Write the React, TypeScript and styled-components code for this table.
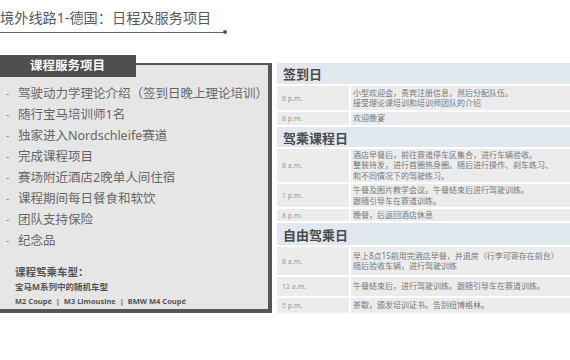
import React from 'react';
import styled, { createGlobalStyle } from 'styled-components';

const GlobalStyle = createGlobalStyle`
  html, body {
    margin: 0;
    padding: 0;
    background: #ffffff;
    overflow: hidden;
  }
  body {
    font-family: "Noto Sans", "Noto Sans CJK SC", sans-serif;
  }
`;

const CJK = `"Noto Sans", "Noto Sans CJK SC", sans-serif`;

const Page = styled.div`
  width: 570px;
  height: 360px;
  overflow: hidden;
  position: relative;
`;

const TitleBlock = styled.div`
  padding-top: 8px;
  width: 228px;
`;

const Title = styled.h1`
  margin: 0;
  font-family: ${CJK};
  font-size: 14.2px;
  font-weight: 400;
  line-height: 20px;
  color: #5a5a5a;
  white-space: nowrap;
`;

const TitleRule = styled.div`
  display: flex;
  align-items: center;
  margin-top: 2px;
  width: 227px;

  &::before {
    content: '';
    flex: 1;
    height: 1px;
    background: #666;
  }
  &::after {
    content: '';
    width: 4px;
    height: 4px;
    border-radius: 50%;
    background: #555;
  }
`;

const Body = styled.div`
  display: flex;
  align-items: flex-start;
  margin-top: 21px;
  gap: 5px;
`;

const LeftColumn = styled.div`
  width: 272px;
  flex: none;
  display: flex;
  flex-direction: column;
`;

const Tab = styled.div`
  width: 136px;
  height: 22px;
  background: #4f4f4f;
  color: #ffffff;
  font-family: ${CJK};
  font-size: 12.5px;
  font-weight: 700;
  line-height: 22px;
  padding-left: 30px;
  box-sizing: border-box;
  margin-bottom: -14px;
  position: relative;
  z-index: 1;
`;

const Panel = styled.div`
  height: 250px;
  box-sizing: border-box;
  background: #e6e6e6;
  border-top: 2px solid #555;
  border-right: 4px solid #555;
  border-bottom: 4px solid #555;
  padding: 17px 0 0 6px;
`;

const ServiceList = styled.ul`
  list-style: none;
  margin: 0;
  padding: 0;
`;

const ServiceItem = styled.li`
  display: flex;
  align-items: center;
  height: 21px;
  font-family: ${CJK};
  font-size: 12.5px;
  color: #666;
  white-space: nowrap;

  &::before {
    content: '-';
    flex: none;
    width: 12px;
    font-size: 10px;
    color: #888;
  }
`;

const CarInfo = styled.div`
  margin: 15px 0 0 9px;
  font-family: ${CJK};
  font-weight: 700;
  color: #555;
  white-space: nowrap;
`;

const CarLine = styled.div<{ $size: number; $height: number }>`
  font-size: ${(p) => p.$size}px;
  line-height: ${(p) => p.$height}px;
`;

const Schedule = styled.div`
  width: 300px;
  flex: none;
  display: grid;
  grid-template-columns: 72px 1fr;
  column-gap: 2px;
  row-gap: 2px;
  margin-top: 8px;
`;

const DayHeader = styled.div<{ $h: number }>`
  grid-column: 1 / -1;
  height: ${(p) => p.$h}px;
  background: #e2e8f0;
  font-family: ${CJK};
  font-size: 13px;
  font-weight: 700;
  color: #4a4a4a;
  display: flex;
  align-items: center;
  padding-left: 6px;
`;

const TimeCell = styled.div<{ $h: number }>`
  height: ${(p) => p.$h}px;
  background: #ececec;
  font-family: ${CJK};
  font-size: 7px;
  color: #999;
  display: flex;
  align-items: center;
  padding-left: 5px;
`;

const TextCell = styled.div<{ $h: number }>`
  height: ${(p) => p.$h}px;
  background: #ececec;
  font-family: ${CJK};
  font-size: 8px;
  line-height: 10.5px;
  color: #777;
  display: flex;
  flex-direction: column;
  justify-content: center;
  padding-left: 2px;
  white-space: nowrap;
  overflow: hidden;
`;

type Row = { time: string; lines: string[]; h: number };
type Day = { title: string; h: number; rows: Row[] };

const services = [
  '驾驶动力学理论介绍（签到日晚上理论培训）',
  '随行宝马培训师1名',
  '独家进入Nordschleife赛道',
  '完成课程项目',
  '赛场附近酒店2晚单人间住宿',
  '课程期间每日餐食和软饮',
  '团队支持保险',
  '纪念品',
];

const days: Day[] = [
  {
    title: '签到日',
    h: 21,
    rows: [
      { time: '6 p.m.', lines: ['小型欢迎会，贵宾注册信息，然后分配队伍。', '接受理论课培训和培训师团队的介绍'], h: 24 },
      { time: '8 p.m.', lines: ['欢迎晚宴'], h: 13 },
    ],
  },
  {
    title: '驾乘课程日',
    h: 20,
    rows: [
      {
        time: '8 a.m.',
        lines: ['酒店早餐后，前往赛道停车区集合，进行车辆验收。', '整装待发，进行首圈热身圈。随后进行操作、刹车练习、', '和不同情况下的驾驶练习。'],
        h: 33,
      },
      { time: '1 p.m.', lines: ['午餐及图片教学会议。午餐结束后进行驾驶训练。', '跟随引导车在赛道训练。'], h: 23 },
      { time: '8 p.m.', lines: ['晚餐，后返回酒店休息'], h: 12 },
    ],
  },
  {
    title: '自由驾乘日',
    h: 22,
    rows: [
      { time: '8 a.m.', lines: ['早上8点15前用完酒店早餐，并退房（行李可寄存在前台）', '随后验收车辆，进行驾驶训练'], h: 28 },
      { time: '12 a.m.', lines: ['午餐结束后，进行驾驶训练。跟随引导车在赛道训练。'], h: 19 },
      { time: '5 p.m.', lines: ['茶歇，颁发培训证书。告别纽博格林。'], h: 15 },
    ],
  },
];

export default function App() {
  return (
    <Page>
      <GlobalStyle />
      <TitleBlock>
        <Title>境外线路1-德国：日程及服务项目</Title>
        <TitleRule />
      </TitleBlock>

      <Body>
        <LeftColumn>
          <Tab>课程服务项目</Tab>
          <Panel>
            <ServiceList>
              {services.map((s) => (
                <ServiceItem key={s}>{s}</ServiceItem>
              ))}
            </ServiceList>
            <CarInfo>
              <CarLine $size={10.5} $height={15}>课程驾乘车型：</CarLine>
              <CarLine $size={8.5} $height={14}>宝马M系列中的随机车型</CarLine>
              <CarLine $size={7.5} $height={14}>M2 Coupé&nbsp; | &nbsp;M3 Limousine&nbsp; | &nbsp;BMW M4 Coupé</CarLine>
            </CarInfo>
          </Panel>
        </LeftColumn>

        <Schedule>
          {days.map((d) => (
            <React.Fragment key={d.title}>
              <DayHeader $h={d.h}>{d.title}</DayHeader>
              {d.rows.map((r, i) => (
                <React.Fragment key={i}>
                  <TimeCell $h={r.h}>{r.time}</TimeCell>
                  <TextCell $h={r.h}>
                    {r.lines.map((l) => (
                      <span key={l}>{l}</span>
                    ))}
                  </TextCell>
                </React.Fragment>
              ))}
            </React.Fragment>
          ))}
        </Schedule>
      </Body>
    </Page>
  );
}
